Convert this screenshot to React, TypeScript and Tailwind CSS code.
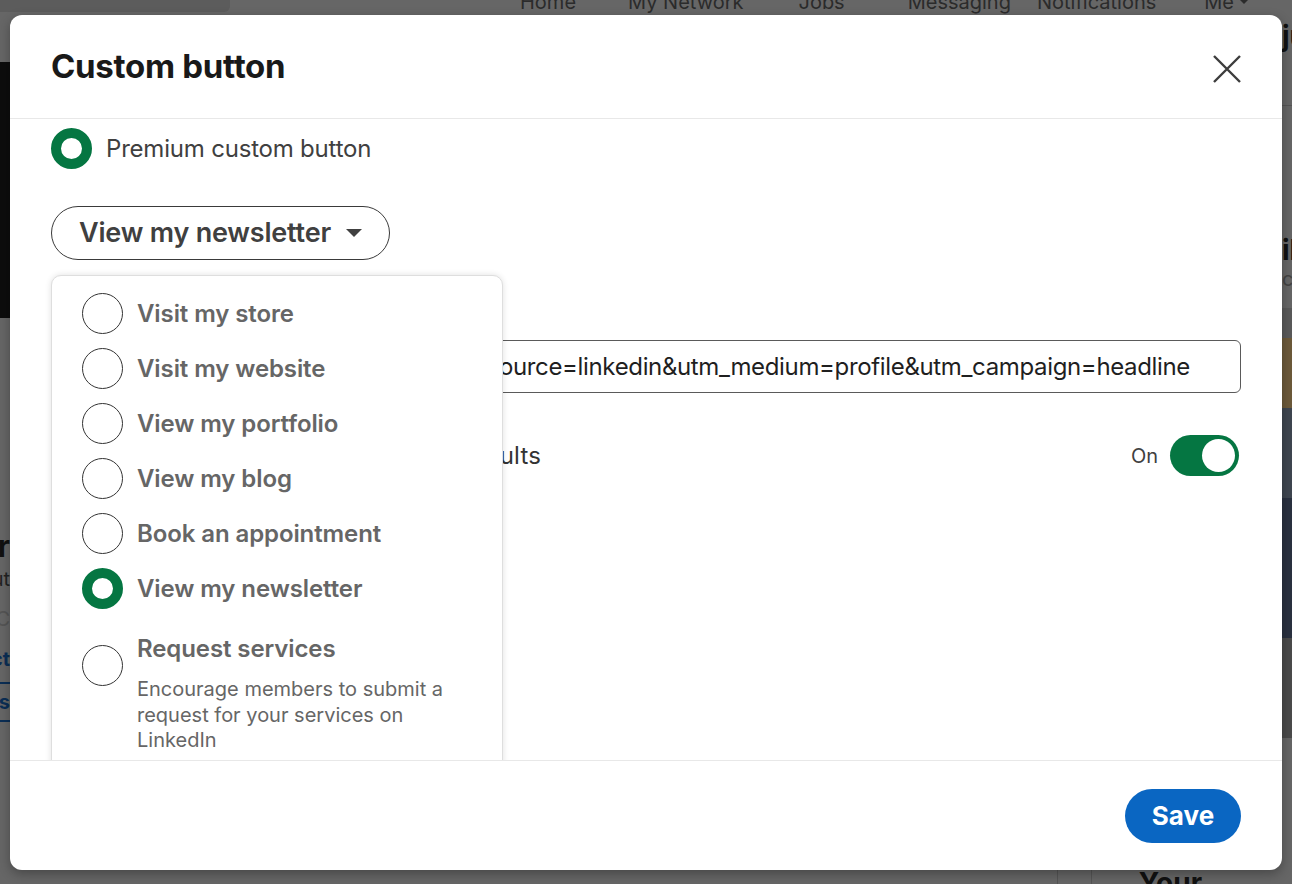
import React from "react";

const options = [
  { label: "Visit my store" },
  { label: "Visit my website" },
  { label: "View my portfolio" },
  { label: "View my blog" },
  { label: "Book an appointment" },
  { label: "View my newsletter", selected: true },
];

function Radio({ checked }: { checked?: boolean }) {
  if (checked) {
    return <span className="block h-[41px] w-[41px] shrink-0 rounded-full border-[10px] border-[#057642] bg-white" />;
  }
  return <span className="block h-[41px] w-[41px] shrink-0 rounded-full border-[1.5px] border-[#333] bg-white" />;
}

function BackgroundPage() {
  return (
    <div className="flex h-full flex-col">
      {/* top nav, mostly hidden behind the modal */}
      <nav className="-mt-[12px] flex h-[27px] items-center text-[20px] text-[#2b2b2b]">
        <div className="ml-[-10px] h-[20px] w-[240px] rounded-[6px] bg-[#5c5c5c]" />
        <span className="ml-[290px]">Home</span>
        <span className="ml-[52px]">My Network</span>
        <span className="ml-[55px]">Jobs</span>
        <span className="ml-[63px]">Messaging</span>
        <span className="ml-[26px]">Notifications</span>
        <span className="ml-[48px] flex items-center gap-1">
          Me
          <svg width="12" height="12" viewBox="0 0 12 12"><path d="M2 4l4 4 4-4z" fill="#2b2b2b" /></svg>
        </span>
      </nav>
      <div className="flex flex-1">
        <div className="flex w-[10px] flex-col overflow-hidden">
          <div className="h-[47px]" />
          <div className="h-[256px] bg-[#0d0d0d]" />
          <div className="ml-[-120px] mt-[210px] flex w-[130px] flex-col items-end text-right">
            <span className="text-[30px] font-bold leading-[36px] text-[#111]">Creator</span>
            <span className="text-[20px] leading-[30px] text-[#222]">Talks about</span>
            <span className="mt-[10px] text-[20px] leading-[30px] text-[#555]">Remote · C</span>
            <span className="mt-[10px] text-[20px] font-bold leading-[30px] text-[#0b2e55]">Contact</span>
            <div className="mt-[8px] h-[2px] w-full bg-[#0b2e55]" />
            <span className="mt-[4px] text-[20px] font-bold leading-[28px] text-[#0b2e55]">Services</span>
            <div className="mt-[4px] h-[2px] w-full bg-[#0b2e55]" />
          </div>
        </div>
        <div className="flex-1" />
        <div className="flex w-[10px] flex-col overflow-hidden">
          <div className="h-[90px] w-[60px] text-[28px] font-bold text-[#111]">ju</div>
          <div className="h-px w-full bg-[#555]" />
          <div className="mt-[128px] w-[60px] text-[28px] font-bold leading-[32px] text-[#111]">il</div>
          <div className="w-[60px] text-[20px] leading-[26px] text-[#444]">co</div>
          <div className="mt-[16px] h-[30px] bg-[#5a5a5a]" />
          <div className="h-[70px] bg-[#6d5a3a]" />
          <div className="h-[90px] bg-[#3f4650]" />
          <div className="h-[140px] bg-[#2a3140]" />
          <div className="h-[100px] bg-[#4b4b4b]" />
        </div>
      </div>
      <div className="flex h-[14px] items-start overflow-hidden">
        <div className="ml-[1057px] h-full w-px bg-[#555]" />
        <div className="ml-[33px] h-full w-px bg-[#555]" />
        <span className="ml-[47px] text-[28px] font-bold leading-[26px] text-[#111]">Your viewers</span>
      </div>
    </div>
  );
}

export default function App() {
  return (
    <div className="relative h-[884px] w-[1292px] overflow-hidden bg-[#666666] font-['Inter','Liberation_Sans',sans-serif]">
      <BackgroundPage />

      {/* Modal */}
      <div className="absolute left-[10px] top-[15px] flex h-[855px] w-[1272px] flex-col overflow-hidden rounded-[12px] bg-white shadow-[0_4px_12px_rgba(0,0,0,0.3)]">
        <header className="flex h-[104px] shrink-0 items-center justify-between border-b border-[#e8e8e8] pl-[41px] pr-[35px]">
          <h1 className="text-[33px] font-bold tracking-[-0.3px] text-[#191919]">Custom button</h1>
          <button className="mt-[5px] flex h-[40px] w-[40px] items-center justify-center">
            <svg width="30" height="30" viewBox="0 0 30 30">
              <path d="M2 2 L28 28 M28 2 L2 28" stroke="#3d3d3d" strokeWidth="2.4" strokeLinecap="butt" />
            </svg>
          </button>
        </header>

        <div className="relative flex-1 overflow-hidden px-[41px]">
          <div className="mt-[9px] flex items-center gap-[14px]">
            <Radio checked />
            <span className="text-[24px] tracking-[-0.2px] text-[#404040]">Premium custom button</span>
          </div>

          <button className="mt-[37px] flex h-[54px] w-[339px] items-center gap-[15px] rounded-full border-[1.5px] border-[#3a3a3a] pl-[27px]">
            <span className="text-[27px] font-semibold tracking-[-0.2px] text-[#404040]">View my newsletter</span>
            <svg width="16" height="9" viewBox="0 0 16 9"><path d="M0 0h16L8 8z" fill="#404040" /></svg>
          </button>

          <div className="mt-[80px] flex h-[53px] items-center justify-end overflow-hidden whitespace-nowrap rounded-[6px] border-[1.5px] border-[#5a5a5a] pr-[50px] text-[24px] tracking-[-0.35px] text-[#1f1f1f]">
            https://www.example.com/newsletter?utm_source=linkedin&amp;utm_medium=profile&amp;utm_campaign=headline
          </div>

          <div className="mt-[42px] flex h-[41px] items-center justify-between pr-[2px]">
            <span className="whitespace-nowrap text-[24px] tracking-[0.17px] text-[#333]">Show custom button in your search results</span>
            <div className="flex items-center gap-[12px]">
              <span className="text-[20px] text-[#404040]">On</span>
              <div className="flex h-[41px] w-[69px] items-center justify-end rounded-full bg-[#057642] pr-[4px]">
                <span className="block h-[33px] w-[33px] rounded-full bg-white" />
              </div>
            </div>
          </div>

          {/* Dropdown menu over the form */}
          <div className="absolute left-[41px] top-[156px] w-[452px] rounded-t-[10px] border border-[#dedede] bg-white pb-[20px] pt-[10px] shadow-[0_0_6px_rgba(0,0,0,0.12)]">
            {options.map((o) => (
              <div key={o.label} className="flex h-[55px] items-center gap-[14px] pl-[30px]">
                <Radio checked={o.selected} />
                <span className="text-[24px] font-semibold tracking-[-0.1px] text-[#666666]">{o.label}</span>
              </div>
            ))}
            <div className="mt-[18px] flex items-start gap-[14px] pl-[30px]">
              <div className="mt-[11px]">
                <Radio />
              </div>
              <div className="flex flex-col">
                <span className="text-[24px] font-semibold leading-[30px] tracking-[-0.1px] text-[#666666]">Request services</span>
                <span className="mt-[13px] max-w-[340px] text-[20px] leading-[25.5px] text-[#666666]">
                  Encourage members to submit a request for your services on LinkedIn
                </span>
              </div>
            </div>
          </div>
        </div>

        <footer className="flex h-[110px] shrink-0 items-center justify-end border-t border-[#e8e8e8] pr-[41px]">
          <button className="h-[54px] w-[116px] rounded-full bg-[#0a66c2] text-[26px] font-bold text-white">Save</button>
        </footer>
      </div>
    </div>
  );
}
